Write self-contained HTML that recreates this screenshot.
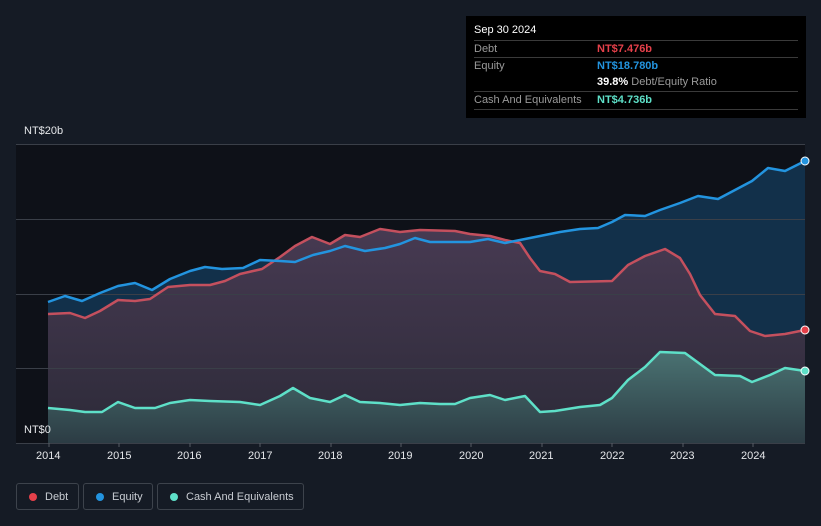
<!DOCTYPE html>
<html><head><meta charset="utf-8"><style>
body{margin:0;width:821px;height:526px;background:#151b25;font-family:"Liberation Sans",sans-serif;overflow:hidden;position:relative}
.tip{position:absolute;left:466px;top:16px;width:340px;height:102px;background:#000;color:#fff;font-size:11px}
.row{position:absolute;left:8px;width:324px;border-top:1px solid #3a3a3a;height:17px;line-height:17px;color:#9a9a9a}
.lg{position:absolute;top:483px;height:27px;border:1px solid #3d434c;border-radius:3px;color:#c8ccd2;font-size:11px;line-height:27px;box-sizing:border-box}
.lg i{position:absolute;left:12px;top:9px;width:8px;height:8px;border-radius:50%}
.ax{position:absolute;top:450px;color:#e5e7ea;font-size:11px}
</style></head><body>
<svg width="821" height="526" style="position:absolute;left:0;top:0">
<defs>
<linearGradient id="gc" x1="0" y1="0" x2="0" y2="1"><stop offset="0" stop-color="#4a7272"/><stop offset="1" stop-color="#2c3c44"/></linearGradient>
<linearGradient id="gd" x1="0" y1="0" x2="0" y2="1"><stop offset="0" stop-color="#473a52"/><stop offset="1" stop-color="#2c2a38"/></linearGradient>
</defs>
<rect x="16" y="144" width="789" height="299" fill="#0e1118"/>
<path d="M48,302 L65,296 82,301 100,293 118,286 135,283 152,290 170,279 190,271 205,267 222,269 243,268 260,260 280,261 295,262 313,255 330,251 345,246 365,251 385,248 400,244 415,238 430,242 470,242 488,239 505,243 520,240 540,236 560,232 580,229 598,228 612,222 625,215 645,216 660,210 680,203 698,196 718,199 735,190 752,181 768,168 785,171 805,161 L805,443 48,443Z" fill="#12304a"/>
<path d="M48,314 L70,313 85,318 100,311 118,300 135,301 150,299 168,287 190,285 210,285 225,281 240,274 262,269 280,257 295,246 312,237 330,244 345,235 360,237 380,229 400,232 420,230 455,231 470,234 490,236 505,240 520,243 530,258 540,271 555,274 570,282 612,281 628,265 645,256 665,249 680,258 690,274 700,295 715,314 735,316 750,331 765,336 785,334 805,330 L805,443 48,443Z" fill="url(#gd)"/>
<g stroke="#3a3f48" stroke-width="1"><line x1="16" y1="144.5" x2="805" y2="144.5"/><line x1="16" y1="219.5" x2="805" y2="219.5"/><line x1="16" y1="294.5" x2="805" y2="294.5"/><line x1="16" y1="368.5" x2="805" y2="368.5"/><line x1="16" y1="443.5" x2="805" y2="443.5"/></g>
<path d="M48,408 L70,410 85,412 102,412 118,402 135,408 155,408 170,403 190,400 210,401 240,402 260,405 280,396 293,388 310,398 330,402 345,395 360,402 380,403 400,405 420,403 440,404 455,404 470,398 490,395 505,400 525,396 540,412 555,411 580,407 600,405 612,398 628,380 645,367 660,352 685,353 700,364 715,375 740,376 752,382 770,375 785,368 805,371 L805,443 48,443Z" fill="url(#gc)"/>
<g fill="none" stroke-width="2.5" stroke-linejoin="round">
<path d="M48,314 L70,313 85,318 100,311 118,300 135,301 150,299 168,287 190,285 210,285 225,281 240,274 262,269 280,257 295,246 312,237 330,244 345,235 360,237 380,229 400,232 420,230 455,231 470,234 490,236 505,240 520,243 530,258 540,271 555,274 570,282 612,281 628,265 645,256 665,249 680,258 690,274 700,295 715,314 735,316 750,331 765,336 785,334 805,330" stroke="#c4505e"/>
<path d="M48,302 L65,296 82,301 100,293 118,286 135,283 152,290 170,279 190,271 205,267 222,269 243,268 260,260 280,261 295,262 313,255 330,251 345,246 365,251 385,248 400,244 415,238 430,242 470,242 488,239 505,243 520,240 540,236 560,232 580,229 598,228 612,222 625,215 645,216 660,210 680,203 698,196 718,199 735,190 752,181 768,168 785,171 805,161" stroke="#2394df"/>
<path d="M48,408 L70,410 85,412 102,412 118,402 135,408 155,408 170,403 190,400 210,401 240,402 260,405 280,396 293,388 310,398 330,402 345,395 360,402 380,403 400,405 420,403 440,404 455,404 470,398 490,395 505,400 525,396 540,412 555,411 580,407 600,405 612,398 628,380 645,367 660,352 685,353 700,364 715,375 740,376 752,382 770,375 785,368 805,371" stroke="#5ee0c8"/>
</g>
<circle cx="805" cy="161" r="4" fill="#2394df" stroke="#fff"/><circle cx="805" cy="330" r="4" fill="#e5404a" stroke="#fff"/><circle cx="805" cy="371" r="4" fill="#5ee0c8" stroke="#fff"/>
<g stroke="#555b64"><line x1="49" y1="443" x2="49" y2="447"/><line x1="119" y1="443" x2="119" y2="447"/><line x1="190" y1="443" x2="190" y2="447"/><line x1="260" y1="443" x2="260" y2="447"/><line x1="331" y1="443" x2="331" y2="447"/><line x1="401" y1="443" x2="401" y2="447"/><line x1="471" y1="443" x2="471" y2="447"/><line x1="542" y1="443" x2="542" y2="447"/><line x1="612" y1="443" x2="612" y2="447"/><line x1="683" y1="443" x2="683" y2="447"/><line x1="753" y1="443" x2="753" y2="447"/></g>
</svg>
<div style="position:absolute;left:24px;top:125px;color:#e5e7ea;font-size:11px">NT$20b</div>
<div style="position:absolute;left:24px;top:424px;color:#e5e7ea;font-size:11px">NT$0</div>
<div class="ax" style="left:36px">2014</div><div class="ax" style="left:107px">2015</div><div class="ax" style="left:177px">2016</div><div class="ax" style="left:248px">2017</div><div class="ax" style="left:318px">2018</div><div class="ax" style="left:388px">2019</div><div class="ax" style="left:459px">2020</div><div class="ax" style="left:529px">2021</div><div class="ax" style="left:600px">2022</div><div class="ax" style="left:670px">2023</div><div class="ax" style="left:741px">2024</div>
<div class="tip">
<div style="position:absolute;left:8px;top:8px;font-size:11px">Sep 30 2024</div>
<div class="row" style="top:24px">Debt<span style="position:absolute;left:123px;color:#e5404a;font-weight:bold">NT$7.476b</span></div>
<div class="row" style="top:41px">Equity<span style="position:absolute;left:123px;color:#2394df;font-weight:bold">NT$18.780b</span></div>
<div class="row" style="top:58px;border-top:none"><span style="position:absolute;left:123px;color:#9a9a9a"><b style="color:#fff">39.8%</b> Debt/Equity Ratio</span></div>
<div class="row" style="top:75px">Cash And Equivalents<span style="position:absolute;left:123px;color:#5ee0c8;font-weight:bold">NT$4.736b</span></div>
<div style="position:absolute;left:8px;top:93px;width:324px;border-top:1px solid #3a3a3a"></div>
</div>
<div class="lg" style="left:16px;width:63px"><i style="background:#e5404a"></i><span style="position:absolute;left:28px">Debt</span></div>
<div class="lg" style="left:83px;width:70px"><i style="background:#2394df"></i><span style="position:absolute;left:28px">Equity</span></div>
<div class="lg" style="left:157px;width:147px"><i style="background:#5ee0c8"></i><span style="position:absolute;left:28px">Cash And Equivalents</span></div>
</body></html>
